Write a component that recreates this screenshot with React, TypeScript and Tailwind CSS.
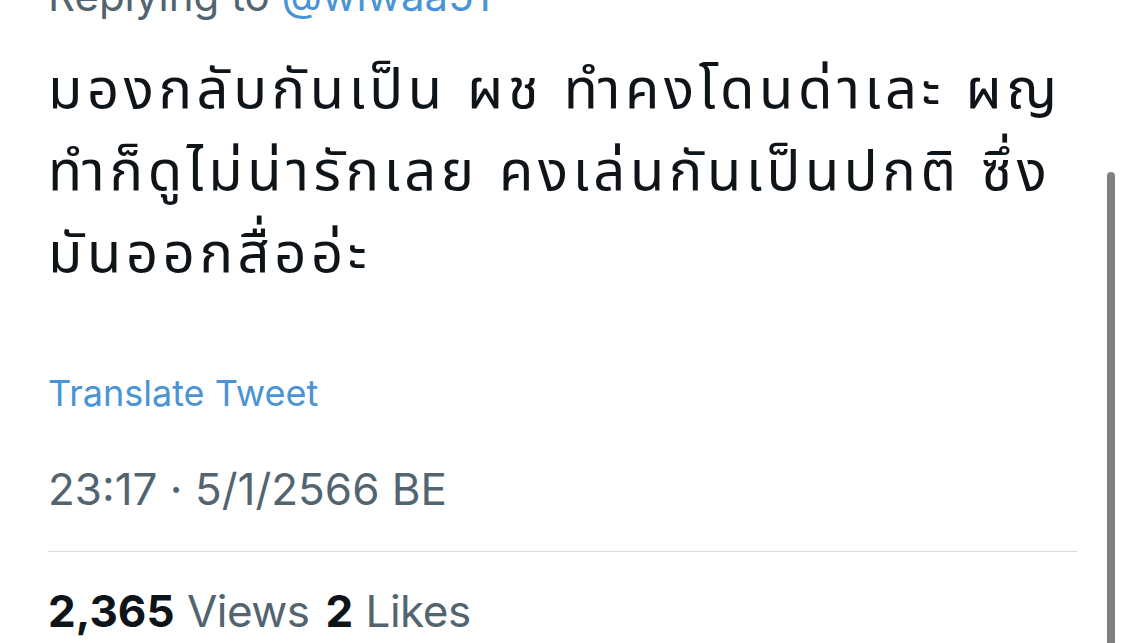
export default function App() {
  const lines = [
    "มองกลับกันเป็น ผช ทำคงโดนด่าเละ ผญ",
    "ทำก็ดูไม่น่ารักเลย คงเล่นกันเป็นปกติ ซึ่ง",
    "มันออกสื่ออ่ะ",
  ];

  return (
    <div
      className="relative h-[643px] w-[1125px] overflow-hidden bg-white"
      style={{ fontFamily: "Inter, 'Noto Sans Thai', 'Noto Sans', sans-serif" }}
    >
      <div className="flex flex-col pl-[48px] pr-[48px]">
        <p className="-mt-[28px] text-[42px] leading-[48px] text-[#536471]">
          Replying to <span className="text-[#4a94d6]">@wiwaa51</span>
        </p>

        <div className="mt-[27px] text-[56px] leading-[82px] tracking-[4.6px] text-[#0f1419]">
          {lines.map((line) => (
            <div key={line} className="whitespace-nowrap">
              {line}
            </div>
          ))}
        </div>

        <p className="mt-[78px] text-[36px] leading-[44px] text-[#4a94d6]">
          Translate Tweet
        </p>

        <p className="mt-[48px] text-[44px] leading-[52px] text-[#536471]">
          23:17 · 5/1/2566 BE
        </p>

        <div className="mt-[36px] h-px w-[1029px] bg-[#d6dbdf]" />

        <div className="mt-[33px] flex items-baseline gap-[16px] text-[44px] leading-[52px]">
          <span>
            <span className="font-bold text-[#0f1419]">2,365</span>{" "}
            <span className="tracking-[-0.5px] text-[#536471]">Views</span>
          </span>
          <span>
            <span className="font-bold text-[#0f1419]">2</span>{" "}
            <span className="tracking-[-0.5px] text-[#536471]">Likes</span>
          </span>
        </div>
      </div>

      <div className="absolute right-[10px] top-[172px] h-[480px] w-[8px] rounded-full bg-[#808080]" />
    </div>
  );
}
